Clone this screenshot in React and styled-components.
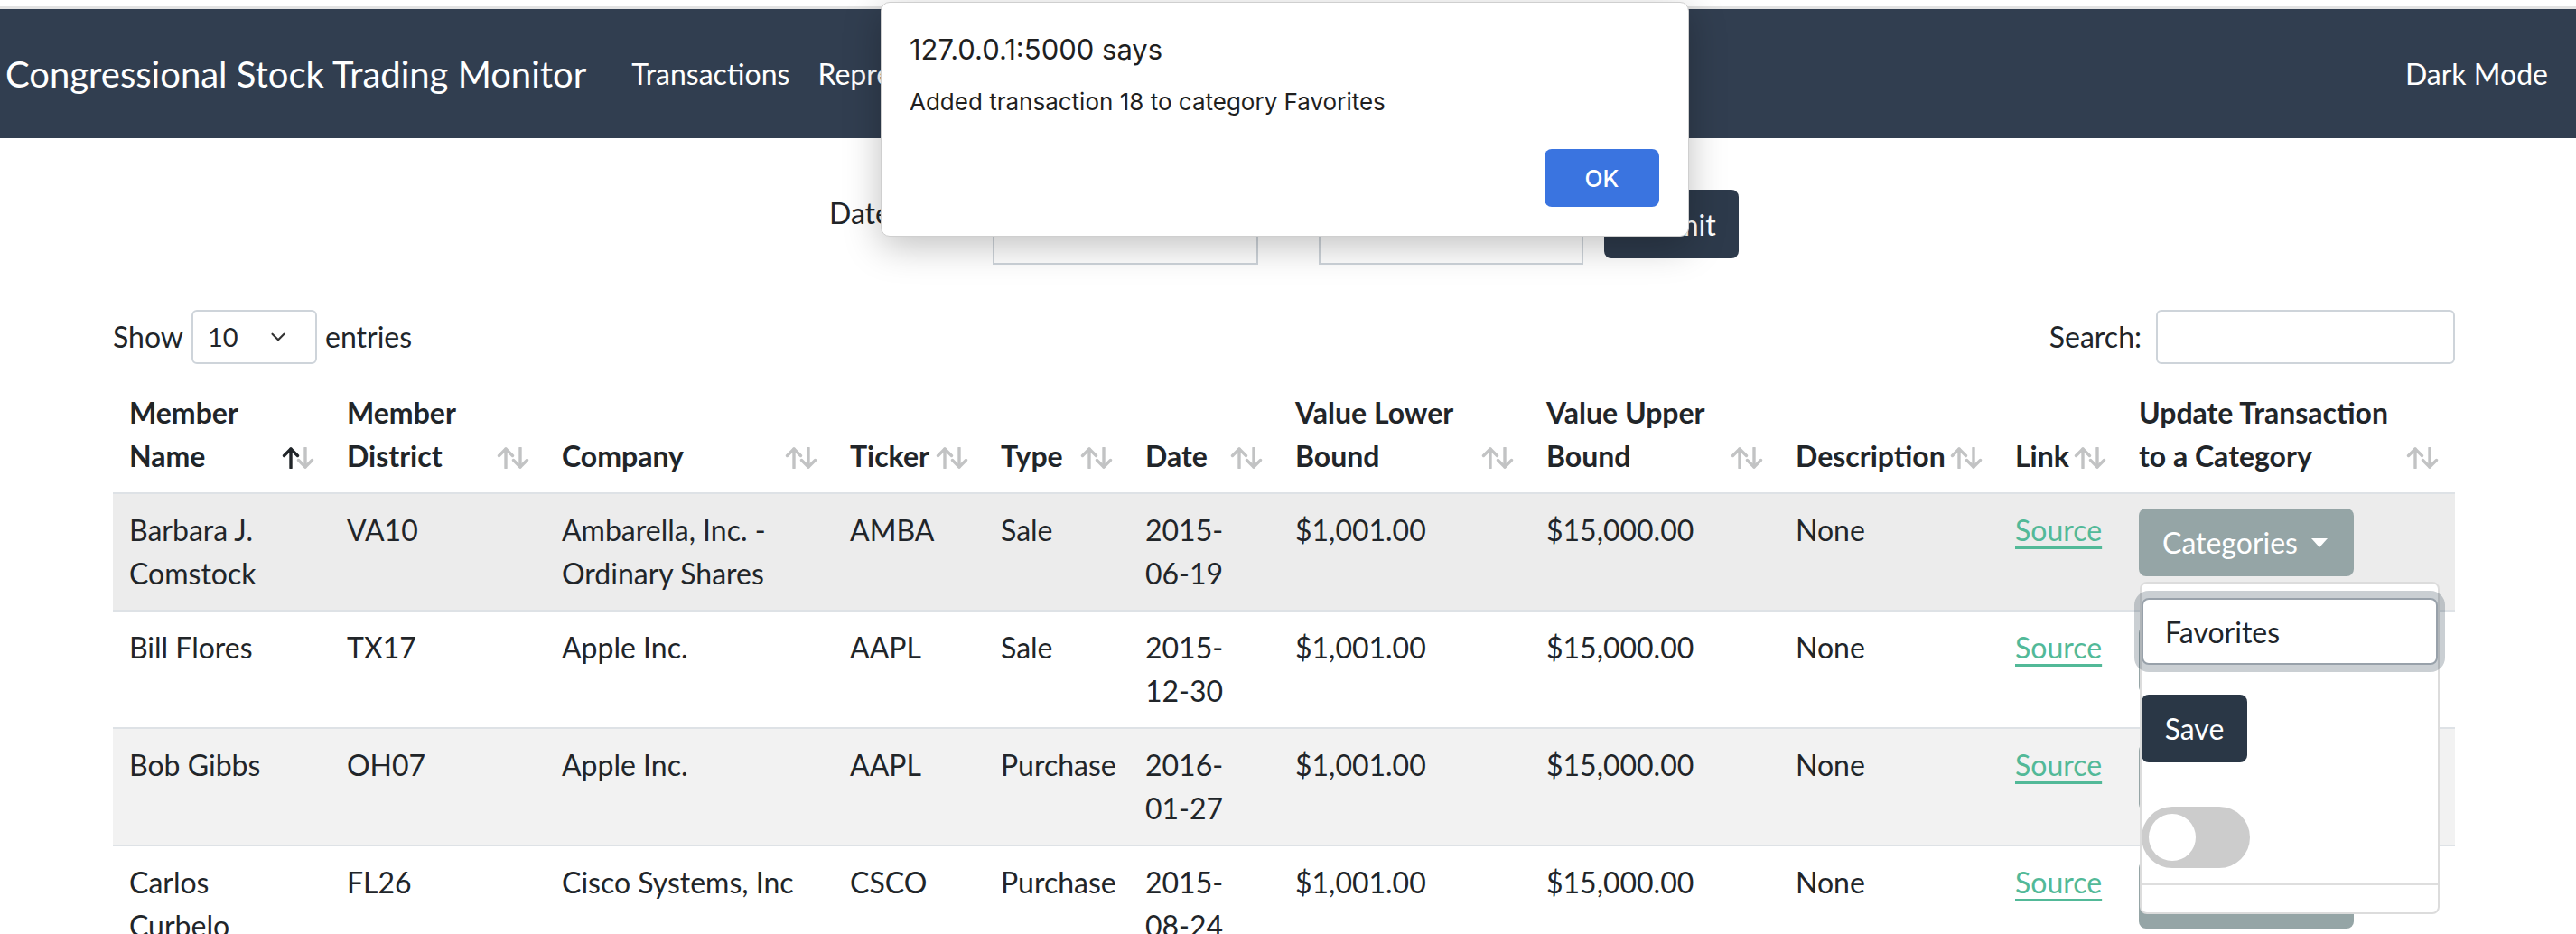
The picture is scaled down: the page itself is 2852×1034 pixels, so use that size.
import React from "react";
import styled, { createGlobalStyle } from "styled-components";
import { ChevronDown } from "lucide-react";

const GlobalStyle = createGlobalStyle`
  html, body {
    margin: 0;
    padding: 0;
    background: #fff;
  }
  body {
    font-family: Lato, "Noto Sans", sans-serif;
    color: #212529;
    font-size: 32px;
    line-height: 48px;
  }
  * { box-sizing: border-box; }
`;

const Page = styled.div`
  position: relative;
  width: 2852px;
  height: 1034px;
  overflow: hidden;
`;

const BrowserEdge = styled.div`
  height: 10px;
  border-bottom: 3px solid #e3e3e3;
`;

const Navbar = styled.nav`
  height: 143px;
  background: #313e50;
  color: #fff;
  display: flex;
  align-items: center;
  padding: 0 31px 0 6px;
`;

const Brand = styled.div`
  font-size: 40px;
  margin-right: 50px;
  white-space: nowrap;
`;

const NavLinks = styled.div`
  display: flex;
  gap: 31px;
  flex: 1;
`;

const NavLink = styled.a`
  color: #fff;
  text-decoration: none;
  font-size: 32px;
`;

const Content = styled.main`
  width: 2593px;
  margin-left: 125px;
`;

const FilterForm = styled.form`
  display: flex;
  justify-content: center;
  align-items: flex-start;
  margin-top: 57px;
`;

const FormLabel = styled.label`
  width: 181px;
  line-height: 48px;
  padding-top: 2px;
`;

const FormText = styled.span`
  width: 67px;
  text-align: center;
  margin-top: 10px;
`;

const DateInput = styled.input`
  width: ${(p) => p.$w}px;
  height: 75px;
  margin-top: 8px;
  border: 2px solid #ced4da;
  border-radius: 0;
  background: #fff;
`;

const SubmitButton = styled.button`
  margin-left: 23px;
  width: 149px;
  height: 76px;
  border: none;
  border-radius: 8px;
  background: #2d3a4b;
  color: #fff;
  font-family: Lato, sans-serif;
  font-size: 32px;
`;

const TableTools = styled.div`
  display: flex;
  justify-content: space-between;
  align-items: center;
  margin-top: 50px;
  height: 60px;
`;

const ToolGroup = styled.div`
  display: flex;
  align-items: center;
  gap: ${(p) => p.$gap}px;
`;

const LengthSelect = styled.div`
  width: 139px;
  height: 60px;
  border: 2px solid #ced4da;
  border-radius: 6px;
  display: flex;
  align-items: center;
  justify-content: space-between;
  padding: 0 28px 0 16px;
  font-size: 29px;
`;

const SearchInput = styled.input`
  width: 331px;
  height: 60px;
  border: 2px solid #ced4da;
  border-radius: 6px;
`;

const Table = styled.table`
  width: 2593px;
  table-layout: fixed;
  border-collapse: collapse;
  margin-top: 14px;
`;

const Col = styled.col`
  width: ${(p) => p.$w}px;
`;

const Th = styled.th`
  text-align: left;
  vertical-align: bottom;
  font-weight: 700;
  padding: 16px 17px 16px 18px;
  border-bottom: 2px solid #dee2e6;
`;

const HeadInner = styled.div`
  display: flex;
  justify-content: space-between;
  align-items: flex-end;
`;

const SortSvg = styled.svg`
  flex: none;
  margin-bottom: 10px;
`;

const Tr = styled.tr`
  background: ${(p) => p.$bg};
`;

const Td = styled.td`
  vertical-align: top;
  padding: 16px 18px;
  border-top: 2px solid #dee2e6;
`;

const SourceLink = styled.a`
  color: #52b998;
  text-decoration: underline;
  text-decoration-thickness: 3px;
  text-underline-offset: 6px;
`;

const DropdownWrap = styled.div`
  position: relative;
  display: inline-block;
`;

const CategoryButton = styled.button`
  display: flex;
  align-items: center;
  width: 238px;
  height: 75px;
  padding: 0 26px;
  border: none;
  border-radius: 8px;
  background: #95a5a6;
  color: #fff;
  font-family: Lato, sans-serif;
  font-size: 32px;

  &::after {
    content: "";
    margin-left: 15px;
    border-top: 10px solid #fff;
    border-left: 9px solid transparent;
    border-right: 9px solid transparent;
  }
`;

const DropdownMenu = styled.div`
  position: absolute;
  z-index: 10;
  top: 81px;
  left: 1px;
  width: 332px;
  height: 368px;
  background: #fff;
  border: 2px solid #dcdcdc;
  border-radius: 8px;
  padding-top: 16px;
  display: flex;
  flex-direction: column;
  align-items: flex-start;
`;

const CategoryInput = styled.input`
  width: 328px;
  height: 74px;
  border: 2px solid #98a1aa;
  border-radius: 8px;
  padding: 0 24px;
  font-family: Lato, sans-serif;
  font-size: 32px;
  color: #212529;
  box-shadow: 0 0 0 8px rgba(44, 62, 80, 0.25);
  outline: none;
`;

const SaveButton = styled.button`
  margin-top: 33px;
  width: 117px;
  height: 75px;
  border: none;
  border-radius: 8px;
  background: #2a3746;
  color: #fff;
  font-family: Lato, sans-serif;
  font-size: 32px;
`;

const Switch = styled.div`
  margin-top: 49px;
  width: 120px;
  height: 68px;
  border-radius: 34px;
  background: #ccc;
  padding: 8px;

  &::before {
    content: "";
    display: block;
    width: 52px;
    height: 52px;
    border-radius: 50%;
    background: #fff;
  }
`;

const Divider = styled.hr`
  width: 100%;
  margin: 17px 0 0;
  border: none;
  border-top: 2px solid #dedede;
`;

const AlertDialog = styled.div`
  position: absolute;
  z-index: 100;
  top: 2px;
  left: 975px;
  width: 895px;
  height: 260px;
  background: #fff;
  border: 1px solid #cfcfcf;
  border-radius: 10px;
  box-shadow: 0 10px 40px rgba(0, 0, 0, 0.25);
  padding: 30px 32px 0 31px;
  font-family: Inter, "Liberation Sans", sans-serif;
  color: #1f1f1f;
  display: flex;
  flex-direction: column;
`;

const AlertTitle = styled.div`
  font-size: 31px;
  line-height: 44px;
`;

const AlertMessage = styled.div`
  margin-top: 20px;
  font-size: 26px;
  line-height: 32px;
`;

const AlertActions = styled.div`
  display: flex;
  justify-content: flex-end;
  margin-top: 36px;
`;

const OkButton = styled.button`
  width: 127px;
  height: 64px;
  border: none;
  border-radius: 8px;
  background: #3a74e0;
  color: #fff;
  font-family: Inter, sans-serif;
  font-size: 26px;
  font-weight: 500;
`;

function SortIcon({ active }) {
  const up = active ? "#212529" : "#c2c3c4";
  return (
    <SortSvg width="37" height="24" viewBox="0 0 37 24" fill="none" strokeWidth="3.4" strokeLinecap="round" strokeLinejoin="round">
      <g stroke={up}>
        <path d="M10 23V2" />
        <path d="M2.5 9.5L10 2l7.5 7.5" />
      </g>
      <g stroke="#c2c3c4">
        <path d="M26 1v21" />
        <path d="M18.5 14.5L26 22l7.5-7.5" />
      </g>
    </SortSvg>
  );
}

const columns = [
  { w: 241, label: ["Member", "Name"], active: true },
  { w: 238, label: ["Member", "District"] },
  { w: 319, label: ["Company"] },
  { w: 167, label: ["Ticker"] },
  { w: 160, label: ["Type"] },
  { w: 166, label: ["Date"] },
  { w: 278, label: ["Value Lower", "Bound"] },
  { w: 276, label: ["Value Upper", "Bound"] },
  { w: 243, label: ["Description"] },
  { w: 137, label: ["Link"] },
  { w: 368, label: ["Update Transaction", "to a Category"] },
];

const rows = [
  { name: "Barbara J. Comstock", district: "VA10", company: "Ambarella, Inc. - Ordinary Shares", ticker: "AMBA", type: "Sale", date: "2015-06-19", bg: "#ececec", open: true },
  { name: "Bill Flores", district: "TX17", company: "Apple Inc.", ticker: "AAPL", type: "Sale", date: "2015-12-30", bg: "#fff" },
  { name: "Bob Gibbs", district: "OH07", company: "Apple Inc.", ticker: "AAPL", type: "Purchase", date: "2016-01-27", bg: "#f2f2f2" },
  { name: "Carlos Curbelo", district: "FL26", company: "Cisco Systems, Inc", ticker: "CSCO", type: "Purchase", date: "2015-08-24", bg: "#fff" },
];

export default function App() {
  return (
    <Page>
      <GlobalStyle />
      <BrowserEdge />
      <Navbar>
        <Brand>Congressional Stock Trading Monitor</Brand>
        <NavLinks>
          <NavLink href="#">Transactions</NavLink>
          <NavLink href="#">Representatives</NavLink>
        </NavLinks>
        <NavLink href="#">Dark Mode</NavLink>
      </Navbar>

      <Content>
        <FilterForm>
          <FormLabel>Date Range:</FormLabel>
          <DateInput type="text" $w={294} />
          <FormText>to</FormText>
          <DateInput type="text" $w={293} />
          <SubmitButton type="button">Submit</SubmitButton>
        </FilterForm>

        <TableTools>
          <ToolGroup $gap={9}>
            Show
            <LengthSelect>
              <span>10</span>
              <ChevronDown size={26} strokeWidth={2} color="#333" />
            </LengthSelect>
            entries
          </ToolGroup>
          <ToolGroup $gap={16}>
            Search:
            <SearchInput type="text" />
          </ToolGroup>
        </TableTools>

        <Table>
          <colgroup>
            {columns.map((c, i) => (
              <Col key={i} $w={c.w} />
            ))}
          </colgroup>
          <thead>
            <tr>
              {columns.map((c, i) => (
                <Th key={i}>
                  <HeadInner>
                    <span>
                      {c.label.map((l, j) => (
                        <React.Fragment key={j}>
                          {j > 0 && <br />}
                          {l}
                        </React.Fragment>
                      ))}
                    </span>
                    <SortIcon active={c.active} />
                  </HeadInner>
                </Th>
              ))}
            </tr>
          </thead>
          <tbody>
            {rows.map((r, i) => (
              <Tr key={i} $bg={r.bg}>
                <Td>{r.name}</Td>
                <Td>{r.district}</Td>
                <Td>{r.company}</Td>
                <Td>{r.ticker}</Td>
                <Td>{r.type}</Td>
                <Td>{r.date}</Td>
                <Td>$1,001.00</Td>
                <Td>$15,000.00</Td>
                <Td>None</Td>
                <Td>
                  <SourceLink href="#">Source</SourceLink>
                </Td>
                <Td>
                  <DropdownWrap>
                    <CategoryButton type="button">Categories</CategoryButton>
                    {r.open && (
                      <DropdownMenu>
                        <CategoryInput type="text" defaultValue="Favorites" />
                        <SaveButton type="button">Save</SaveButton>
                        <Switch />
                        <Divider />
                      </DropdownMenu>
                    )}
                  </DropdownWrap>
                </Td>
              </Tr>
            ))}
          </tbody>
        </Table>
      </Content>

      <AlertDialog role="alertdialog">
        <AlertTitle>127.0.0.1:5000 says</AlertTitle>
        <AlertMessage>Added transaction 18 to category Favorites</AlertMessage>
        <AlertActions>
          <OkButton type="button">OK</OkButton>
        </AlertActions>
      </AlertDialog>
    </Page>
  );
}
